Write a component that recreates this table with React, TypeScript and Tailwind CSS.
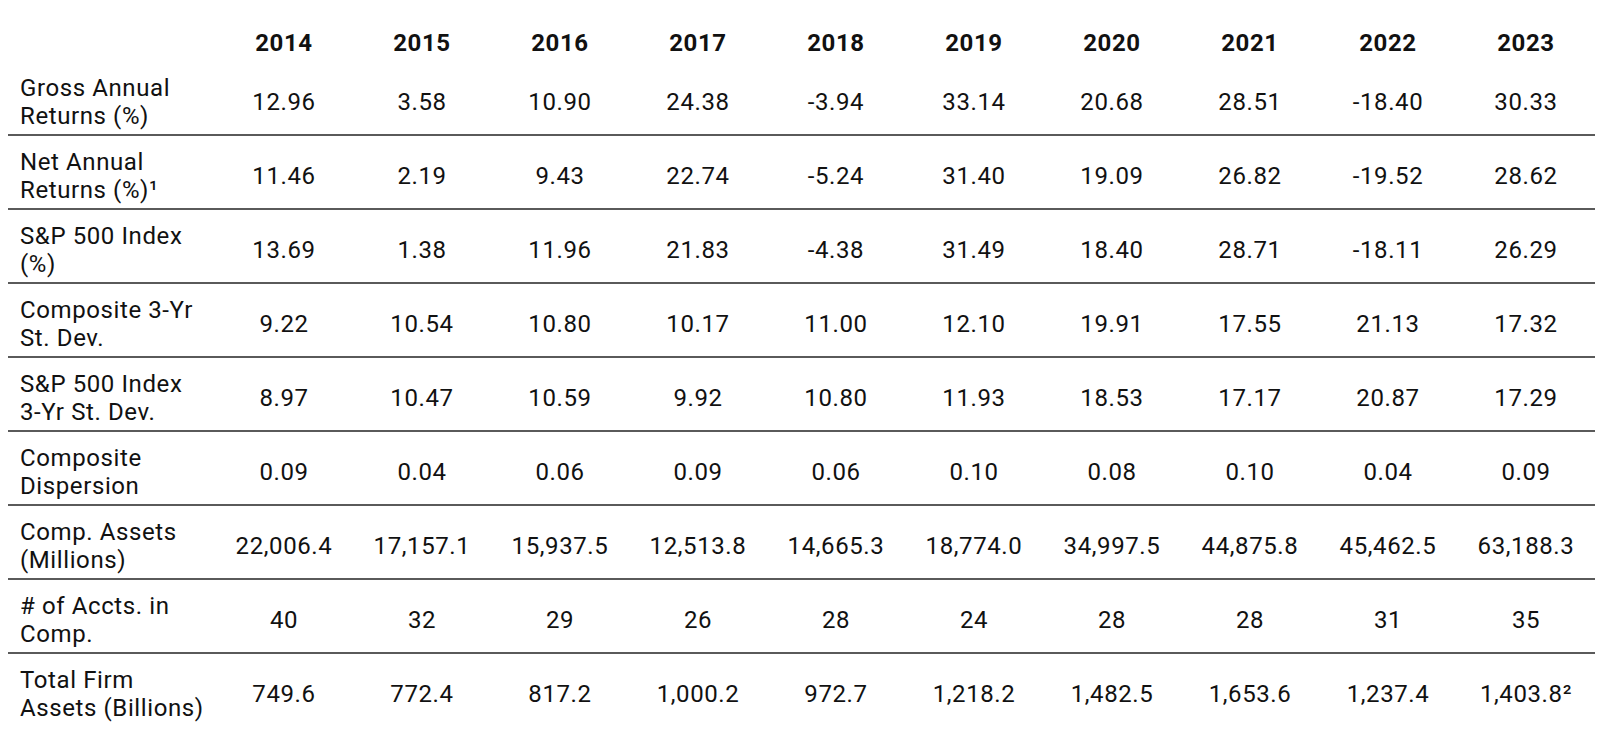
import React from "react";

const years = ["2014", "2015", "2016", "2017", "2018", "2019", "2020", "2021", "2022", "2023"];

const rows: { label: [string, string]; values: string[]; labelSup?: string; lastSup?: string }[] = [
  {
    label: ["Gross Annual", "Returns (%)"],
    values: ["12.96", "3.58", "10.90", "24.38", "-3.94", "33.14", "20.68", "28.51", "-18.40", "30.33"],
  },
  {
    label: ["Net Annual", "Returns (%)"],
    labelSup: "1",
    values: ["11.46", "2.19", "9.43", "22.74", "-5.24", "31.40", "19.09", "26.82", "-19.52", "28.62"],
  },
  {
    label: ["S&P 500 Index", "(%)"],
    values: ["13.69", "1.38", "11.96", "21.83", "-4.38", "31.49", "18.40", "28.71", "-18.11", "26.29"],
  },
  {
    label: ["Composite 3-Yr", "St. Dev."],
    values: ["9.22", "10.54", "10.80", "10.17", "11.00", "12.10", "19.91", "17.55", "21.13", "17.32"],
  },
  {
    label: ["S&P 500 Index", "3-Yr St. Dev."],
    values: ["8.97", "10.47", "10.59", "9.92", "10.80", "11.93", "18.53", "17.17", "20.87", "17.29"],
  },
  {
    label: ["Composite", "Dispersion"],
    values: ["0.09", "0.04", "0.06", "0.09", "0.06", "0.10", "0.08", "0.10", "0.04", "0.09"],
  },
  {
    label: ["Comp. Assets", "(Millions)"],
    values: ["22,006.4", "17,157.1", "15,937.5", "12,513.8", "14,665.3", "18,774.0", "34,997.5", "44,875.8", "45,462.5", "63,188.3"],
  },
  {
    label: ["# of Accts. in", "Comp."],
    values: ["40", "32", "29", "26", "28", "24", "28", "28", "31", "35"],
  },
  {
    label: ["Total Firm", "Assets (Billions)"],
    values: ["749.6", "772.4", "817.2", "1,000.2", "972.7", "1,218.2", "1,482.5", "1,653.6", "1,237.4", "1,403.8"],
    lastSup: "2",
  },
];

export default function App() {
  return (
    <div className="min-h-[743px] w-[1611px] bg-white text-[#111] font-['Roboto',_'Liberation_Sans',_sans-serif]">
      <table className="ml-[8px] w-[1587px] table-fixed border-collapse text-[24px] leading-[28px] tracking-[0.6px]">
        <colgroup>
          <col className="w-[207px]" />
          {years.map((y) => (
            <col key={y} className="w-[138px]" />
          ))}
        </colgroup>
        <thead>
          <tr>
            <th className="pt-[29px] pb-[5px]" />
            {years.map((y) => (
              <th key={y} className="pt-[29px] pb-[5px] text-center font-bold">
                {y}
              </th>
            ))}
          </tr>
        </thead>
        <tbody>
          {rows.map((row, i) => (
            <tr
              key={i}
              className={i < rows.length - 1 ? "border-b-2 border-[#5a5a5a]" : ""}
            >
              <td className="pl-[12px] pt-[12px] pb-[4px] text-left align-middle whitespace-nowrap">
                <div>{row.label[0]}</div>
                <div>
                  {row.label[1]}
                  {row.labelSup && <span>¹</span>}
                </div>
              </td>
              {row.values.map((v, j) => (
                <td key={j} className="pt-[12px] pb-[4px] text-center align-middle whitespace-nowrap">
                  {v}
                  {row.lastSup && j === row.values.length - 1 && <span>²</span>}
                </td>
              ))}
            </tr>
          ))}
        </tbody>
      </table>
    </div>
  );
}
